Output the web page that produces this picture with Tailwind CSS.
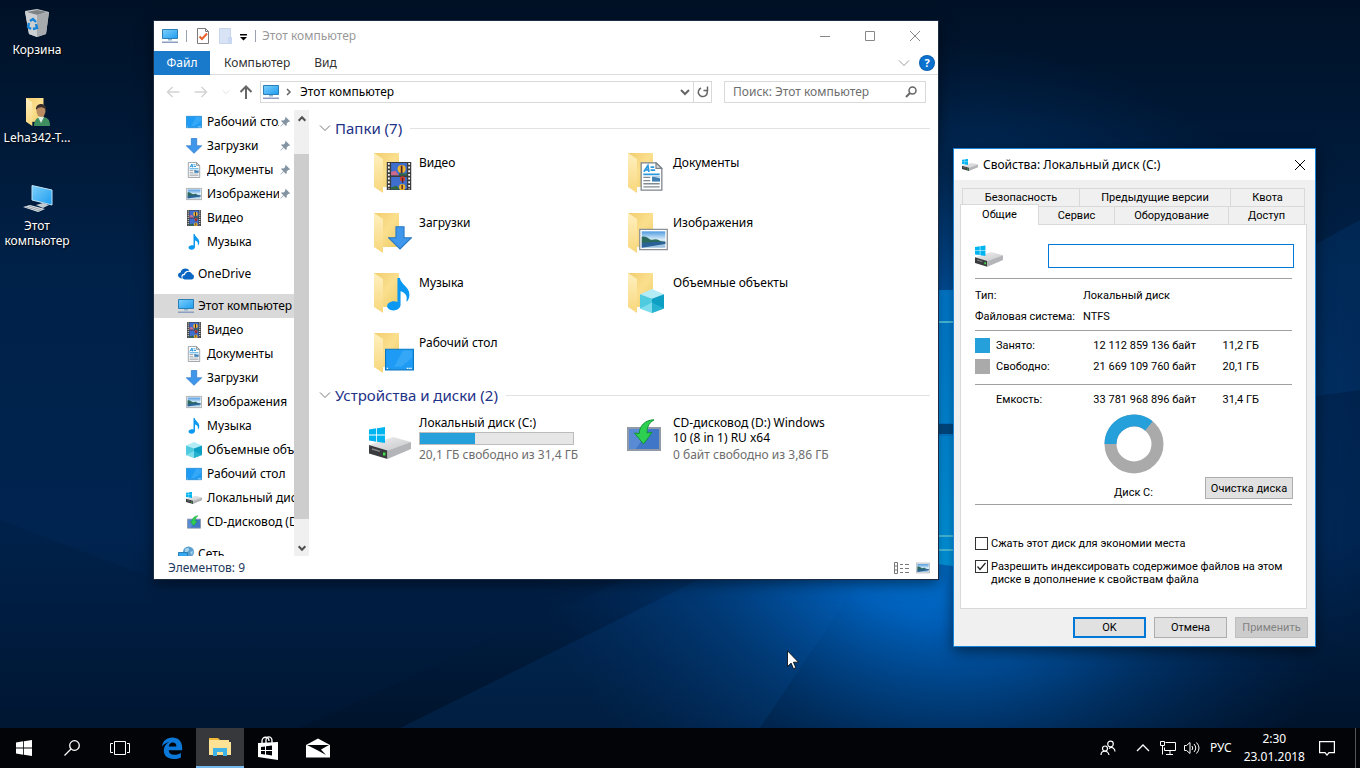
<!doctype html>
<html lang="ru">
  <head>
    <meta charset="utf-8" />
    <meta name="viewport" content="width=device-width, initial-scale=1" />
    <title>Этот компьютер</title>
    <script src="https://cdn.jsdelivr.net/npm/@tailwindcss/browser@4"></script>
  </head>
  <body class="relative flex h-screen flex-col overflow-hidden bg-[#001a38] font-['Noto_Sans','Open_Sans',sans-serif] text-xs text-black">
    <!-- Icon sprite -->
    <svg class="absolute size-0" aria-hidden="true">
      <defs>
        <linearGradient id="screen" x1="0" y1="0" x2="1" y2="1">
          <stop offset="0" stop-color="#7fd0fb" />
          <stop offset="1" stop-color="#1c9cf0" />
        </linearGradient>
        <linearGradient id="folder-back" x1="0" y1="0" x2="1" y2="1">
          <stop offset="0" stop-color="#f1cd6e" />
          <stop offset="0.5" stop-color="#fbdf8e" />
          <stop offset="1" stop-color="#eccb66" />
        </linearGradient>
        <linearGradient id="folder-front" x1="0" y1="0" x2="0" y2="1">
          <stop offset="0" stop-color="#fff0c0" />
          <stop offset="1" stop-color="#f8d77c" />
        </linearGradient>
        <linearGradient id="metal" x1="0" y1="0" x2="1" y2="1">
          <stop offset="0" stop-color="#f1f1f2" />
          <stop offset="1" stop-color="#c6c7c9" />
        </linearGradient>
        <linearGradient id="landscape" x1="0" y1="0" x2="0" y2="1">
          <stop offset="0" stop-color="#4f9be0" />
          <stop offset="0.5" stop-color="#d8ecf8" />
          <stop offset="1" stop-color="#8fb9d8" />
        </linearGradient>
      </defs>

      <symbol id="i-computer" viewBox="0 0 16 16">
        <path fill="url(#screen)" stroke="#2b7fb8" d="M.5 1.500h15v9H.5z" />
        <path fill="#8fb4cf" d="M6 11h4v1.500H6z" />
        <path fill="#8c9fc0" d="M0 13.500h16V15H0z" />
      </symbol>

      <symbol id="i-desktop" viewBox="0 0 16 16">
        <path fill="#1e9cf5" stroke="#0c78c4" stroke-width=".6" d="M.3 2.300h15.400v11.400H.3z" />
        <path fill="#4ab2fa" d="M10 3h5v4l-6 5H5z" opacity=".5" />
        <path fill="#fff" d="M1 12.500h.7v.7H1zM12 12.500h.7v.7H12zM13 12.500h.7v.7H13zM14 12.500h.7v.7H14z" />
      </symbol>

      <symbol id="i-download" viewBox="0 0 16 16">
        <path fill="#3e97ea" stroke="#2877c4" stroke-width=".7" d="M5.300.500h5.400v7.300h5L8 15.300.300 7.800h5z" />
      </symbol>

      <symbol id="i-document" viewBox="0 0 16 16">
        <path fill="#fff" stroke="#7c848b" stroke-width=".7" d="M2.300.500h8.200l3.200 3v12H2.300z" />
        <path fill="#ddd" stroke="#7c848b" stroke-width=".7" d="M10.500.500v3h3z" />
        <path stroke="#2a98dd" stroke-width=".9" d="M3.500 6.800h9M7.500 4.500h2.500M7.500 2.800h2" />
        <path fill="none" stroke="#2a98dd" d="m3.800 5.400 2.200-3.400.6 3.400M4.600 4.300h2" />
        <path stroke="#808a92" stroke-width=".7" d="M3.500 8.500h3.800M3.500 10.300h3.800M3.500 12h9M3.500 13.700h9" />
        <path fill="#3f7fb4" d="M8.300 8h4.400v2.800H8.300z" />
        <path fill="#cbe3f2" d="M8.300 8h4.400v1z" />
      </symbol>

      <symbol id="i-picture" viewBox="0 0 16 16">
        <path fill="#fff" stroke="#8c9094" stroke-width=".7" d="M.4 2.400h15.200v11.200H.4z" />
        <path fill="url(#landscape)" d="M1.500 3.500h13v9h-13z" />
        <path fill="#2c6a5e" d="M1.500 6.500c1.500-.6 3 .3 4.500 1.300s3-.6 4.500.4 2.500 1 4 1v1h-13z" />
        <path fill="#2b6398" d="M1.500 10c4-.8 9-.6 13-.8v1.300l-13 2z" />
      </symbol>

      <symbol id="i-video" viewBox="0 0 16 16">
        <path fill="#3c3c3c" d="M1 0h14v16H1z" />
        <path fill="#3f6fce" d="M3.500.500h9v7h-9zM3.500 8.500h9v7h-9z" />
        <path fill="#d06a8a" d="M3.500 5.500 6 5l2 2.500H3.500z" />
        <path fill="#2f6a3c" d="M8 6.500h4.500v1H8zM3.500 14.500l3-1 2 2h-5z" />
        <circle cx="9.500" cy="4" r="2.300" fill="#eeb52e" />
        <circle cx="10" cy="9.600" r="1.500" fill="#cf3e2c" />
        <circle cx="9.800" cy="14.400" r="1.800" fill="#eeb52e" />
        <path fill="#4b2430" d="M9 2h1v4.500H9zM9.700 9h.7v3h-.7zM9.400 13h.8v2.500h-.8z" />
        <path stroke="#fff" stroke-width="1" stroke-dasharray="1.100 1" d="M2.200.5v15M13.800.5v15" />
      </symbol>

      <symbol id="i-music" viewBox="0 0 16 16">
        <path fill="#0a98f2" d="M7.500 0h1.200c.3 3 4.600 4.300 4.600 8 0 1.500-.5 2.600-1.200 3.400l-.3-.3C12.600 8.400 11 7 9 6.400V13c0 1.600-1.600 2.700-3.500 2.700S2.500 14.700 2.500 13.600s1.400-2.300 3.300-2.300c.7 0 1.300.1 1.700.3z" />
      </symbol>

      <symbol id="i-cube" viewBox="0 0 16 16">
        <path fill="#b4ecf5" d="m0 3.500 8-3.500 8 3.500-8 3.500z" />
        <path fill="#4fcbe0" d="m0 3.500 8 3v9.500l-8-3z" />
        <path fill="#0d9fc4" d="m16 3.500-8 3v9.500l8-3z" />
        <path fill="#9ceaf4" d="m0 13 8-4v7z" opacity=".6" />
        <path fill="#37bfdb" d="m16 13-8-4v7z" opacity=".6" />
      </symbol>

      <symbol id="i-onedrive" viewBox="0 0 16 16">
        <path fill="#0a66c2" d="M4.500 12.500C2 12.500 0 11.300 0 9.300 0 7.500 1.300 6.600 2.600 6.500 3 4 5 2.500 7.300 2.500c1.900 0 3.300.8 4.100 2.200-2.600-.4-4.800 1-5.300 3-1.800.2-2.900 1.500-2.700 3.100.1.700.5 1.300 1.100 1.700z" />
        <path fill="#0a66c2" d="M7 13.500c-1.500 0-2.600-.9-2.600-2.200 0-1.400 1.100-2.200 2.500-2.200.3-2 1.900-3.300 3.800-3.300 1.700 0 3 1 3.400 2.500 1.200.2 1.900 1.100 1.900 2.400 0 1.600-1.100 2.800-2.700 2.800z" />
      </symbol>

      <symbol id="i-network" viewBox="0 0 16 16">
        <circle cx="10.500" cy="6" r="5.500" fill="#5a9fd0" />
        <path fill="#a6d3ec" d="M7 3c2-2 5-1 4 1S8 7 7 6zM12 6l3-1-1 4z" />
        <path fill="#31a8ef" stroke="#2b7fb8" d="M.5 6.500h9v6h-9z" />
        <path fill="#7c8ea3" d="M0 14h11v1H0z" />
      </symbol>

      <symbol id="i-flag" viewBox="0 0 20 20">
        <path fill="#00b4f0" d="m0 3 9-1.300V9.500H0zM10 1.500 20 0v9.500H10zM0 10.500h9v7.800L0 17zM10 10.500h10V20l-10-1.500z" />
      </symbol>

      <symbol id="i-drive" viewBox="0 0 42 32">
        <path fill="url(#metal)" d="m0 18 24-8 18 5-23.500 8.500z" />
        <path fill="#3a3b3e" d="m0 18 18.500 5.500V32L0 26.500z" />
        <path fill="#b4b5b8" d="m42 15-23.500 8.500V32L42 22z" />
        <path stroke="#85878a" stroke-width="1.500" d="m3 22 8 2.400" />
        <path fill="#3fe04a" d="M14 25.500h2.500v3H14z" />
        <use href="#i-flag" x="0" y="0" width="16" height="16" />
      </symbol>

      <symbol id="i-cd" viewBox="0 0 34 32">
        <path fill="#4076c8" stroke="#9099a6" stroke-width="2" d="M1 9h32v22H1z" />
        <path fill="#6fa0e0" d="M2 10h20L9 30H2z" opacity=".5" />
        <path fill="#2ed052" stroke="#0f9434" d="M27 .8C18 1 12.500 7 12.200 14.500L7.500 14 16.500 25 25 13.500l-5 .5C20 9 21 4.500 27 .8z" />
      </symbol>

      <symbol id="i-folder" viewBox="0 0 40 40">
        <path fill="url(#folder-back)" d="M0 0h25v34H0z" />
        <path fill="url(#folder-front)" d="m0 0 9 6v34l-9-6z" />
      </symbol>

      <symbol id="i-pin" viewBox="0 0 12 12">
        <path fill="#8494a2" d="M7 0 12 5l-1 1-1-.3-2 2 .2 2-1 1L4.500 8 1 11.500.300 11 4 7.400 1.300 4.800l1-1 2.100.3 2-2L6 1z" />
      </symbol>

      <symbol id="i-chevron" viewBox="0 0 12 12">
        <path fill="none" stroke="currentColor" d="m1 3.500 5 5 5-5" />
      </symbol>
    </svg>

    <!-- Wallpaper -->
    <svg class="absolute inset-0 size-full" viewBox="0 0 1360 768" preserveAspectRatio="xMidYMid slice" aria-hidden="true">
      <defs>
        <linearGradient id="sky" x1="0" y1="0" x2="0" y2="1">
          <stop offset="0" stop-color="#001126" />
          <stop offset="0.35" stop-color="#002148" />
          <stop offset="0.7" stop-color="#002450" />
          <stop offset="1" stop-color="#001024" />
        </linearGradient>
        <radialGradient id="glow" cx="950" cy="470" r="430" gradientUnits="userSpaceOnUse">
          <stop offset="0" stop-color="#0090f0" />
          <stop offset="0.350" stop-color="#006cd0" stop-opacity=".85" />
          <stop offset="0.650" stop-color="#004a94" stop-opacity=".45" />
          <stop offset="1" stop-color="#003068" stop-opacity="0" />
        </radialGradient>
        <linearGradient id="pane" x1="0" y1="0" x2="0" y2="1">
          <stop offset="0" stop-color="#0084e0" />
          <stop offset="1" stop-color="#00a4f4" />
        </linearGradient>
      </defs>
      <rect width="1360" height="768" fill="url(#sky)" />
      <rect width="1360" height="768" fill="url(#glow)" />
      <path fill="#001c40" opacity=".35" d="M154 579h470L300 728H0V520z" />
      <path fill="#0a5cb4" opacity=".15" d="m940 450 420-230v170zM940 460 400 728h360z" />
      <path fill="url(#pane)" d="M860 290h93v133h-93zM860 436h93v130l-93-12z" />
      <path fill="#00508e" d="M930 424h30v10h-30z" />
      <path stroke="#4fd0f4" stroke-width="2" d="M930 322h30M930 536h30M930 550h30" />
    </svg>

    <main class="relative min-h-0 flex-1">
      <!-- Desktop shortcuts -->
      <nav class="flex w-[74px] flex-col text-center leading-[15px] text-white [text-shadow:1px_1px_2px_#000]" aria-label="Рабочий стол">
        <a href="#bin" class="flex h-22 flex-col items-center gap-[2px] pt-2">
          <svg class="size-8" viewBox="0 0 32 32" aria-hidden="true">
            <path fill="#c9cccf" d="m4 3 12-2 12 3-3 22-9 3-8-3z" />
            <path fill="#7d8285" d="m6 4 10-2 10 2-10 3z" />
            <path fill="#ccd0d3" d="m4 4 12 3v22l-8-3z" />
            <path fill="#a7abae" d="m28 4-12 3v22l9-3z" />
            <path fill="none" stroke="#1583d8" stroke-width="2.400" d="m9 13 3-2 3 3M8 15l-1 4 3 2M12 21l4-1-1-4" />
          </svg>
          Корзина
        </a>
        <a href="#user" class="flex h-22 flex-col items-center gap-[2px] pt-2">
          <svg class="size-8" viewBox="0 0 32 32" aria-hidden="true">
            <use href="#i-folder" x="5" y="2" width="28" height="28" />
            <path fill="#3f8e60" d="M13 30c0-6 3-9 8-9s8 2 8 9z" />
            <path fill="#dcefe6" d="m17 21 3 6 3-6z" />
            <ellipse cx="20" cy="15" rx="4.500" ry="6" fill="#b98b62" />
            <path fill="#3a2f2c" d="M15 14c-1-8 11-8 10 0-2-3-7-4-10 0z" />
          </svg>
          Leha342-T...
        </a>
        <a href="#computer" class="flex h-22 flex-col items-center gap-[2px] pt-2">
          <svg class="size-8" viewBox="0 0 32 32" aria-hidden="true">
            <path fill="url(#screen)" stroke="#bfe3f8" d="M11 1.500 31 6v15L11 16z" />
            <path fill="#c3ccd3" d="m15 21 7-2 6 2-6 3z" />
            <path fill="#dfe4e8" d="m2 23 7-2 15 4-7 3z" />
            <path stroke="#98a2aa" d="m5 23 14 4M8 22l13 4" />
          </svg>
          Этот компьютер
        </a>
      </nav>

      <!-- Explorer window -->
      <section class="absolute top-[21px] left-[154px] flex h-[558px] w-[784px] flex-col bg-white shadow-[0_0_0_1px_#1c2c44,0_4px_14px_#0008]">
        <header class="flex h-[30px] items-center pl-2">
          <svg class="size-4"><use href="#i-computer" /></svg>
          <span class="ml-2 h-3 w-px bg-gray-400"></span>
          <button class="ml-2 size-4" aria-label="Свойства">
            <svg viewBox="0 0 16 16" class="size-4">
              <path fill="#fff" stroke="#7b7b7b" d="M2.500.500h8l3 3v12h-11z" />
              <path fill="none" stroke="#7b7b7b" d="M10.500.500v3h3" />
              <path fill="none" stroke="#e8612c" stroke-width="2" d="m4.500 8.500 2.500 2.500 5-5.500" />
            </svg>
          </button>
          <button class="ml-2 size-4" aria-label="Новая папка">
            <svg viewBox="0 0 16 16" class="size-4">
              <path fill="#d8e4f6" stroke="#c6d4ec" d="M.5.500h11v15H.5z" />
              <path fill="#c9d8f0" d="M9 9h4v7H9z" />
            </svg>
          </button>
          <button class="ml-0.5 size-3" aria-label="Настройка панели">
            <svg viewBox="0 0 12 12" class="size-3"><path d="M3 4h7v1.500H3zM3 7h7l-3.500 3.500z" /></svg>
          </button>
          <span class="ml-1.5 h-3 w-px bg-gray-400"></span>
          <h1 class="ml-1.5 text-[#999]">Этот компьютер</h1>
          <div class="ml-auto flex h-full text-[#888]">
            <button class="grid w-[45px] place-items-center" aria-label="Свернуть">
              <svg class="size-3" viewBox="0 0 12 12" fill="none" stroke="currentColor"><path d="M1 6.500h10" /></svg>
            </button>
            <button class="grid w-[45px] place-items-center" aria-label="Развернуть">
              <svg class="size-3" viewBox="0 0 12 12" fill="none" stroke="currentColor"><path d="M1.500 1.500h9v9h-9z" /></svg>
            </button>
            <button class="grid w-[46px] place-items-center" aria-label="Закрыть">
              <svg class="size-3" viewBox="0 0 12 12" fill="none" stroke="currentColor"><path d="m1 1 10 10M11 1 1 11" /></svg>
            </button>
          </div>
        </header>

        <nav class="flex h-6 items-stretch border-b border-[#dadbdc] text-[#333]">
          <button class="-mb-px w-14 bg-[#1979ca] text-white">Файл</button>
          <button class="px-3.5">Компьютер</button>
          <button class="px-2.5">Вид</button>
          <div class="ml-auto flex items-center gap-2.5 pr-1">
            <button class="text-[#999]" aria-label="Развернуть ленту"><svg class="size-3"><use href="#i-chevron" /></svg></button>
            <button class="size-3.5 rounded-full bg-[#0b72d0] text-[11px] leading-[14px] font-bold text-white ring-1 ring-[#0a5fb0]" aria-label="Справка">?</button>
          </div>
        </nav>

        <div class="flex h-[34px] items-center pr-3 pl-3">
          <div class="flex items-center gap-3.5 text-[#d4d4d4]">
            <button aria-label="Назад">
              <svg class="size-3.5" viewBox="0 0 14 14" fill="none" stroke="currentColor" stroke-width="1.500"><path d="M13.500 7H1.500M6.500 2l-5 5 5 5" /></svg>
            </button>
            <button aria-label="Вперед">
              <svg class="size-3.5" viewBox="0 0 14 14" fill="none" stroke="currentColor" stroke-width="1.500"><path d="M.5 7h12M7.500 2l5 5-5 5" /></svg>
            </button>
            <button aria-label="Последние расположения">
              <svg class="size-2"><use href="#i-chevron" /></svg>
            </button>
          </div>
          <button class="ml-2 text-[#666]" aria-label="Вверх">
            <svg class="size-4" viewBox="0 0 16 16" fill="none" stroke="currentColor" stroke-width="2"><path d="M8 15V3M2.500 8 8 2.500 13.500 8" /></svg>
          </button>
          <div class="ml-1.5 flex h-[22px] flex-1 items-center border border-[#d9d9d9] pl-0.5">
            <svg class="size-4"><use href="#i-computer" /></svg>
            <svg class="ml-1 size-3 text-[#666]" viewBox="0 0 12 12" fill="none" stroke="currentColor" stroke-width="1.500"><path d="m4 3 3 3-3 3" /></svg>
            <button class="ml-[5px]">Этот компьютер</button>
            <button class="mr-0.5 ml-auto text-[#666]" aria-label="Предыдущие расположения">
              <svg class="size-3" viewBox="0 0 12 12" fill="none" stroke="currentColor" stroke-width="2"><path d="m2 4 4 4 4-4" /></svg>
            </button>
            <button class="grid h-full w-[18px] place-items-center border-l border-[#d9d9d9] text-[#666]" aria-label="Обновить">
              <svg class="size-3" viewBox="0 0 12 12" fill="none" stroke="currentColor" stroke-width="1.500"><path d="M4 2a4.500 4.500 0 1 0 5.500 1.500M10.500.500v4h-4" /></svg>
            </button>
          </div>
          <form class="ml-3 flex h-[22px] w-[202px] items-center border border-[#d9d9d9] pr-2 pl-2">
            <input type="search" aria-label="Поиск" placeholder="Поиск: Этот компьютер" class="w-full min-w-0 outline-none placeholder:text-[#6d6d6d]" />
            <svg class="size-3 shrink-0 text-[#666]" viewBox="0 0 12 12" fill="none" stroke="currentColor" stroke-width="1.500"><circle cx="7.500" cy="4.500" r="3.500" /><path stroke-width="2" d="M5 7 1 11" /></svg>
          </form>
        </div>

        <div class="flex min-h-0 flex-1">
          <!-- Navigation pane -->
          <nav class="mt-px w-[140px] overflow-hidden whitespace-nowrap" aria-label="Область навигации">
            <ul class="mb-2 [&_a]:flex [&_a]:h-6 [&_a]:items-center [&_a]:gap-[5px] [&_a]:pl-8">
              <li><a href="#desktop"><svg class="size-4 shrink-0"><use href="#i-desktop" /></svg><span class="w-[72px] overflow-hidden">Рабочий стол</span><svg class="-ml-1 size-2.5 shrink-0"><use href="#i-pin" /></svg></a></li>
              <li><a href="#downloads"><svg class="size-4 shrink-0"><use href="#i-download" /></svg><span class="w-[72px] overflow-hidden">Загрузки</span><svg class="-ml-1 size-2.5 shrink-0"><use href="#i-pin" /></svg></a></li>
              <li><a href="#documents"><svg class="size-4 shrink-0"><use href="#i-document" /></svg><span class="w-[72px] overflow-hidden">Документы</span><svg class="-ml-1 size-2.5 shrink-0"><use href="#i-pin" /></svg></a></li>
              <li><a href="#pictures"><svg class="size-4 shrink-0"><use href="#i-picture" /></svg><span class="w-[72px] overflow-hidden">Изображения</span><svg class="-ml-1 size-2.5 shrink-0"><use href="#i-pin" /></svg></a></li>
              <li><a href="#video"><svg class="size-4 shrink-0"><use href="#i-video" /></svg>Видео</a></li>
              <li><a href="#music"><svg class="size-4 shrink-0"><use href="#i-music" /></svg>Музыка</a></li>
            </ul>
            <a href="#onedrive" class="mb-2 flex h-6 items-center gap-1 pl-6"><svg class="size-4 shrink-0"><use href="#i-onedrive" /></svg>OneDrive</a>
            <a href="#computer" class="flex h-6 items-center gap-1 bg-[#d9d9d9] pl-6"><svg class="size-4 shrink-0"><use href="#i-computer" /></svg>Этот компьютер</a>
            <ul class="mb-2 [&_a]:flex [&_a]:h-6 [&_a]:items-center [&_a]:gap-[5px] [&_a]:pl-8">
              <li><a href="#video"><svg class="size-4 shrink-0"><use href="#i-video" /></svg>Видео</a></li>
              <li><a href="#documents"><svg class="size-4 shrink-0"><use href="#i-document" /></svg>Документы</a></li>
              <li><a href="#downloads"><svg class="size-4 shrink-0"><use href="#i-download" /></svg>Загрузки</a></li>
              <li><a href="#pictures"><svg class="size-4 shrink-0"><use href="#i-picture" /></svg>Изображения</a></li>
              <li><a href="#music"><svg class="size-4 shrink-0"><use href="#i-music" /></svg>Музыка</a></li>
              <li><a href="#objects"><svg class="size-4 shrink-0"><use href="#i-cube" /></svg>Объемные объекты</a></li>
              <li><a href="#desktop"><svg class="size-4 shrink-0"><use href="#i-desktop" /></svg>Рабочий стол</a></li>
              <li><a href="#drive-c"><svg class="size-4 shrink-0"><use href="#i-drive" /></svg>Локальный диск (C:)</a></li>
              <li><a href="#drive-d"><svg class="size-4 shrink-0 p-px"><use href="#i-cd" /></svg>CD-дисковод (D:)</a></li>
            </ul>
            <a href="#network" class="flex h-6 items-center gap-1 pl-6"><svg class="size-4 shrink-0"><use href="#i-network" /></svg>Сеть</a>
          </nav>

          <!-- Scrollbar -->
          <div class="mt-px flex w-[15px] flex-col items-center bg-[#f0f0f0] text-[#505050]">
            <button class="grid h-[17px] place-items-center" aria-label="Вверх"><svg class="size-2.5 rotate-180" viewBox="0 0 12 12" fill="none" stroke="currentColor" stroke-width="2.500"><path d="m2 4 4 4 4-4" /></svg></button>
            <span class="mt-[27px] h-[365px] w-full bg-[#cdcdcd]"></span>
            <button class="mt-auto grid h-[17px] place-items-center" aria-label="Вниз"><svg class="size-2.5" viewBox="0 0 12 12" fill="none" stroke="currentColor" stroke-width="2.500"><path d="m2 4 4 4 4-4" /></svg></button>
          </div>

          <!-- Contents -->
          <div class="min-w-0 flex-1 pt-[7px] pr-2 pl-2.5">
            <h2 class="flex h-6 items-center gap-1 text-[15px] text-[#1e3287] after:ml-1 after:h-px after:flex-1 after:bg-[#e2e2e2]">
              <svg class="size-3 text-[#777]"><use href="#i-chevron" /></svg>Папки (7)
            </h2>
            <ul class="mt-[5px] grid grid-cols-[254px_254px] pl-[55px] [&_a]:flex [&_a]:h-[60px] [&_a]:gap-[5px] [&_a]:pt-2 [&_span]:pt-0.5">
              <li><a href="#video">
                <svg class="size-10" viewBox="0 0 40 40"><use href="#i-folder" /><use href="#i-video" x="11" y="9" width="28" height="28" /></svg><span>Видео</span>
              </a></li>
              <li><a href="#documents">
                <svg class="size-10" viewBox="0 0 40 40"><use href="#i-folder" /><use href="#i-document" x="9" y="9" width="29" height="29" /></svg><span>Документы</span>
              </a></li>
              <li><a href="#downloads">
                <svg class="size-10" viewBox="0 0 40 40"><use href="#i-folder" /><use href="#i-download" x="14" y="13" width="24" height="24" /></svg><span>Загрузки</span>
              </a></li>
              <li><a href="#pictures">
                <svg class="size-10" viewBox="0 0 40 40"><use href="#i-folder" /><use href="#i-picture" x="11" y="12" width="29" height="29" /></svg><span>Изображения</span>
              </a></li>
              <li><a href="#music">
                <svg class="size-10" viewBox="0 0 40 40"><use href="#i-folder" /><use href="#i-music" x="8" y="5" width="33" height="33" /></svg><span>Музыка</span>
              </a></li>
              <li><a href="#objects">
                <svg class="size-10" viewBox="0 0 40 40"><use href="#i-folder" /><use href="#i-cube" x="12" y="16" width="24" height="24" /></svg><span>Объемные объекты</span>
              </a></li>
              <li><a href="#desktop">
                <svg class="size-10" viewBox="0 0 40 40"><use href="#i-folder" /><use href="#i-desktop" x="11" y="12" width="29" height="29" /></svg><span>Рабочий стол</span>
              </a></li>
            </ul>

            <h2 class="-mt-0.5 flex h-6 items-center gap-1 text-[15px] text-[#1e3287] after:ml-1 after:h-px after:flex-1 after:bg-[#e2e2e2]">
              <svg class="size-3 text-[#777]"><use href="#i-chevron" /></svg>Устройства и диски (2)
            </h2>
            <ul class="mt-2 grid grid-cols-[254px_254px] pl-[50px] leading-[15px]">
              <li>
                <a href="#drive-c" class="flex gap-2">
                  <svg class="mt-3 h-8 w-[42px] shrink-0"><use href="#i-drive" /></svg>
                  <span class="flex flex-col">
                    <span>Локальный диск (C:)</span>
                    <span class="my-0.5 h-[13px] w-[155px] border border-[#bcbcbc] bg-[#e6e6e6]" role="meter" aria-label="Занято" aria-valuenow="36" aria-valuemin="0" aria-valuemax="100">
                      <span class="block h-full bg-[#26a0da]" style="width: 36%"></span>
                    </span>
                    <span class="text-[#6d6d6d]">20,1 ГБ свободно из 31,4 ГБ</span>
                  </span>
                </a>
              </li>
              <li>
                <a href="#drive-d" class="flex gap-3 pl-1">
                  <svg class="mt-1 h-8 w-[34px] shrink-0"><use href="#i-cd" /></svg>
                  <span class="flex w-[160px] flex-col">
                    <span>CD-дисковод (D:) Windows 10 (8 in 1) RU x64</span>
                    <span class="mt-0.5 text-[#6d6d6d]">0 байт свободно из 3,86 ГБ</span>
                  </span>
                </a>
              </li>
            </ul>
          </div>
        </div>

        <footer class="relative flex h-[23px] items-center bg-white pr-2 pl-3.5 text-[#1e395b]">
          Элементов: 9
          <div class="ml-auto flex gap-1.5">
            <button aria-label="Таблица">
              <svg class="size-4" viewBox="0 0 16 16" fill="none" stroke="#777"><path d="M.5 2.500h3v11h-3zM0 6h4M0 10h4M6 4.500h3M11 4.500h4M6 8.500h3M11 8.500h4M6 12.500h3M11 12.500h4" /></svg>
            </button>
            <button aria-label="Крупные значки"><svg class="size-3.5"><use href="#i-picture" /></svg></button>
          </div>
        </footer>
      </section>

      <!-- Disk properties dialog -->
      <section class="absolute top-[148px] left-[953px] flex h-[499px] w-[363px] flex-col border border-[#1883d7] bg-[#f0f0f0] font-[Roboto,'Liberation_Sans',sans-serif] text-[11px] leading-[13px] shadow-[0_4px_14px_#0008]" role="dialog" aria-labelledby="dialog-title">
        <header class="flex h-[31px] items-center gap-[5px] bg-white pr-2 pl-2 font-['Noto_Sans','Open_Sans',sans-serif] text-xs">
          <svg class="size-4"><use href="#i-drive" /></svg>
          <h2 id="dialog-title">Свойства: Локальный диск (C:)</h2>
          <button class="ml-auto" aria-label="Закрыть">
            <svg class="size-3.5" viewBox="0 0 14 14" fill="none" stroke="#000"><path d="m2 2 10 10M12 2 2 12" /></svg>
          </button>
        </header>

        <div class="flex flex-1 flex-col pt-2 pr-2 pl-1.5">
          <div role="tablist">
            <div class="mx-0.5 flex h-[18px] border-t border-l border-[#d9d9d9] [&>button]:border-r [&>button]:border-[#d9d9d9]">
              <button role="tab" class="w-[117px]">Безопасность</button>
              <button role="tab" class="w-[151px]">Предыдущие версии</button>
              <button role="tab" class="flex-1">Квота</button>
            </div>
            <div class="flex h-[18px] items-stretch pr-0.5 [&>button]:border-[#d9d9d9]">
              <button role="tab" aria-selected="true" class="relative -mt-0.5 -mb-px w-[79px] border-x border-t bg-white pb-0.5">Общие</button>
              <button role="tab" class="w-[76px] border-t border-r">Сервис</button>
              <button role="tab" class="w-[114px] border-t border-r">Оборудование</button>
              <button role="tab" class="flex-1 border-t border-r">Доступ</button>
            </div>
          </div>

          <form role="tabpanel" class="flex h-[385px] flex-col border border-[#d9d9d9] bg-white px-3.5 pt-[19px]">
            <div class="flex h-6 justify-between">
              <svg class="h-6 w-7"><use href="#i-drive" /></svg>
              <input type="text" aria-label="Метка тома" class="-mr-0.5 w-[246px] border border-[#0078d7] px-1 outline-none" />
            </div>

            <hr class="mt-2.5 border-[#a0a0a0]" />
            <dl class="mt-1.5 grid grid-cols-[108px_1fr] leading-[21px]">
              <dt>Тип:</dt>
              <dd>Локальный диск</dd>
              <dt class="whitespace-nowrap">Файловая система:</dt>
              <dd>NTFS</dd>
            </dl>

            <hr class="mt-[3px] border-[#a0a0a0]" />
            <table class="mt-1 w-[284px] table-fixed leading-[21px]">
              <tbody>
                <tr>
                  <td class="w-[21px]"><span class="block size-[15px] bg-[#26a0da]"></span></td>
                  <th class="w-[70px] text-left font-normal">Занято:</th>
                  <td class="text-right">12 112 859 136 байт</td>
                  <td class="w-[63px] text-right">11,2 ГБ</td>
                </tr>
                <tr>
                  <td><span class="block size-[15px] bg-[#aaaaaa]"></span></td>
                  <th class="text-left font-normal">Свободно:</th>
                  <td class="text-right">21 669 109 760 байт</td>
                  <td class="text-right">20,1 ГБ</td>
                </tr>
              </tbody>
            </table>

            <hr class="mt-[7px] border-[#a0a0a0]" />
            <table class="mt-1 w-[284px] table-fixed leading-[21px]">
              <tbody>
                <tr>
                  <td class="w-[21px]"></td>
                  <th class="w-[70px] text-left font-normal">Емкость:</th>
                  <td class="text-right">33 781 968 896 байт</td>
                  <td class="w-[63px] text-right">31,4 ГБ</td>
                </tr>
              </tbody>
            </table>

            <div class="mt-1 grid grid-cols-[1fr_auto_1fr] items-end">
              <span></span>
              <figure class="flex flex-col items-center gap-3">
                <svg class="size-[60px]" viewBox="0 0 60 60" fill="none" stroke-width="12" role="img" aria-label="Занято 36%">
                  <circle cx="30" cy="30" r="23.500" stroke="#aaaaaa" />
                  <path stroke="#26a0da" d="M6.500 30A23.500 23.500 0 0 1 44.900 11.800" />
                </svg>
                <figcaption>Диск C:</figcaption>
              </figure>
              <button type="button" class="-mr-px h-[22px] w-[88px] justify-self-end border border-[#adadad] bg-[#e1e1e1] whitespace-nowrap">Очистка диска</button>
            </div>

            <hr class="mt-[5px] border-[#a0a0a0]" />
            <label class="mt-8 flex items-start gap-[3px]">
              <input type="checkbox" class="size-[13px] shrink-0 appearance-none border border-[#333] bg-white" />
              Сжать этот диск для экономии места
            </label>
            <label class="mt-2.5 flex items-start gap-[3px]">
              <span class="relative size-[13px] shrink-0">
                <input type="checkbox" checked class="block size-[13px] appearance-none border border-[#333] bg-white" />
                <svg class="absolute inset-0 size-[13px]" viewBox="0 0 13 13" fill="none" stroke="#222" stroke-width="1.200"><path d="m2.500 6.500 2.500 3 5.500-6.500" /></svg>
              </span>
              <span>Разрешить индексировать содержимое файлов на этом диске в дополнение к свойствам файла</span>
            </label>
          </form>

          <div class="mt-2 -mr-px flex justify-end gap-2 [&>button]:h-[21px] [&>button]:w-[73px]">
            <button class="border-2 border-[#0078d7] bg-[#e1e1e1]">OK</button>
            <button class="border border-[#adadad] bg-[#e1e1e1]">Отмена</button>
            <button disabled class="border border-[#bfbfbf] bg-[#cccccc] text-[#838383]">Применить</button>
          </div>
        </div>
      </section>

      <!-- Mouse pointer -->
      <svg class="absolute top-[650px] left-[787px] h-5 w-3" viewBox="0 0 12 20" aria-hidden="true">
        <path fill="#fff" stroke="#000" stroke-width=".8" d="M.5.800v15.700l3.600-3.400 2.400 5.600 2.300-1-2.400-5.500h5.100z" />
      </svg>
    </main>

    <!-- Taskbar -->
    <footer class="relative flex h-10 items-stretch bg-[#020408] text-white">
      <div class="flex [&>button]:grid [&>button]:w-12 [&>button]:place-items-center">
        <button aria-label="Пуск">
          <svg class="size-4" viewBox="0 0 20 20" fill="#fff"><path d="m0 3 9-1.300V9.500H0zM10 1.500 20 0v9.500H10zM0 10.500h9v7.800L0 17zM10 10.500h10V20l-10-1.500z" /></svg>
        </button>
        <button aria-label="Поиск">
          <svg class="size-4" viewBox="0 0 16 16" fill="none" stroke="#fff" stroke-width="1.300"><circle cx="10.500" cy="5.500" r="4.800" /><path d="m7 9-6.500 6.500" /></svg>
        </button>
        <button aria-label="Представление задач">
          <svg class="h-4 w-5" viewBox="0 0 20 16" fill="none" stroke="#fff"><path d="M4.500 1.500h11v13h-11zM3 3.500H.5v9H3M17 3.500h2.500v9H17" /></svg>
        </button>
        <button class="ml-1" aria-label="Microsoft Edge">
          <svg class="size-[22px]" viewBox="0 0 22 22"><path fill="#0c78d8" d="M1 9.500C1.600 4 5.600.500 11.300.500c6 0 9.900 4 9.900 10.300v2.400H7.700c.2 3 2.400 4.500 5.700 4.500 2.500 0 4.700-.7 6.500-1.800v4.500c-2 1-4.500 1.600-7.400 1.600-6 0-9.700-3.300-9.700-8.700 0-3.800 2-6.800 5.500-8.400C4.900 5.600 2.600 7 1 9.500zm6.800 0h7.600c0-2.600-1.300-4-3.600-4S8.200 7 7.800 9.500z" /></svg>
        </button>
        <button class="border-b-2 border-[#76b9ed] bg-[#37383c]" aria-label="Проводник">
          <svg class="h-5 w-[22px]" viewBox="0 0 22 20">
            <path fill="#f0b93a" d="M0 1h9l2 2H0z" />
            <path fill="#fde295" d="M0 3h20v2h2v13H0z" />
            <path fill="#3fb3e6" d="M4 11h14v8h-4v-4H8v4H4z" />
          </svg>
        </button>
        <button aria-label="Магазин">
          <svg class="h-6 w-[22px]" viewBox="0 0 22 24">
            <path fill="#fff" d="m1 7 20-1v18L1 21z" />
            <path fill="none" stroke="#fff" stroke-width="1.300" d="M5 8V5c0-5 7-5 7 0M9 7V4c0-4.500 6-4 6 1v2" />
            <path fill="#020408" d="m4 11 4-.5V14H4zM9 10.300l6-.8V14H9zM4 15h4v3.500L4 18zM9 15h6v4.500l-6-.9z" />
          </svg>
        </button>
        <button class="ml-0.5" aria-label="Почта">
          <svg class="h-5 w-6" viewBox="0 0 24 20"><path fill="#fff" d="M0 7 12 .500 24 7v12.500H0z" /><path fill="#020408" d="M1 7h22l-8 4.500 5 5.500-9-5z" /></svg>
        </button>
      </div>

      <div class="ml-auto flex items-center">
        <button class="mr-5" aria-label="Люди">
          <svg class="size-4" viewBox="0 0 16 16" fill="none" stroke="#fff" stroke-width="1.200"><circle cx="10.500" cy="4" r="2.800" /><circle cx="5" cy="8.500" r="2.500" /><path d="M1 15c0-5 7-5 8 0M9 8.500c3-2.500 6 0 6 3" /></svg>
        </button>
        <button class="mr-2.5" aria-label="Скрытые значки">
          <svg class="size-3.5" viewBox="0 0 14 14" fill="none" stroke="#fff" stroke-width="1.300"><path d="m1 10 6-6 6 6" /></svg>
        </button>
        <button class="mr-2" aria-label="Сеть">
          <svg class="size-4" viewBox="0 0 16 16" fill="none" stroke="#fff"><path d="M5.500 2.500h10v8h-11v-3M10 10.500V14M6 14.500h7M.5 1.500h4v4h-4zM2.500 5.500v9" /></svg>
        </button>
        <button class="mr-2.5" aria-label="Громкость">
          <svg class="size-4" viewBox="0 0 16 16" fill="none" stroke="#fff"><path d="M.5 5.500h2l3.500-3v11l-3.500-3h-2zM8 6q1.500 2 0 4M10 4q3.500 4 0 8M12.500 2.500q5 5.500 0 11" /></svg>
        </button>
        <button class="mr-3">РУС</button>
        <button class="flex flex-col items-center leading-[18px]">
          <span>2:30</span>
          <span>23.01.2018</span>
        </button>
        <button class="mr-5 ml-3.5" aria-label="Центр уведомлений">
          <svg class="size-4" viewBox="0 0 16 16" fill="none" stroke="#fff" stroke-width="1.200"><path d="M.6 1.600h14.800v11H10l-2 2.500-2-2.500H.6z" /></svg>
        </button>
        <button class="h-full w-[5px] border-l border-[#555]" aria-label="Свернуть все окна"></button>
      </div>
    </footer>
  </body>
</html>
